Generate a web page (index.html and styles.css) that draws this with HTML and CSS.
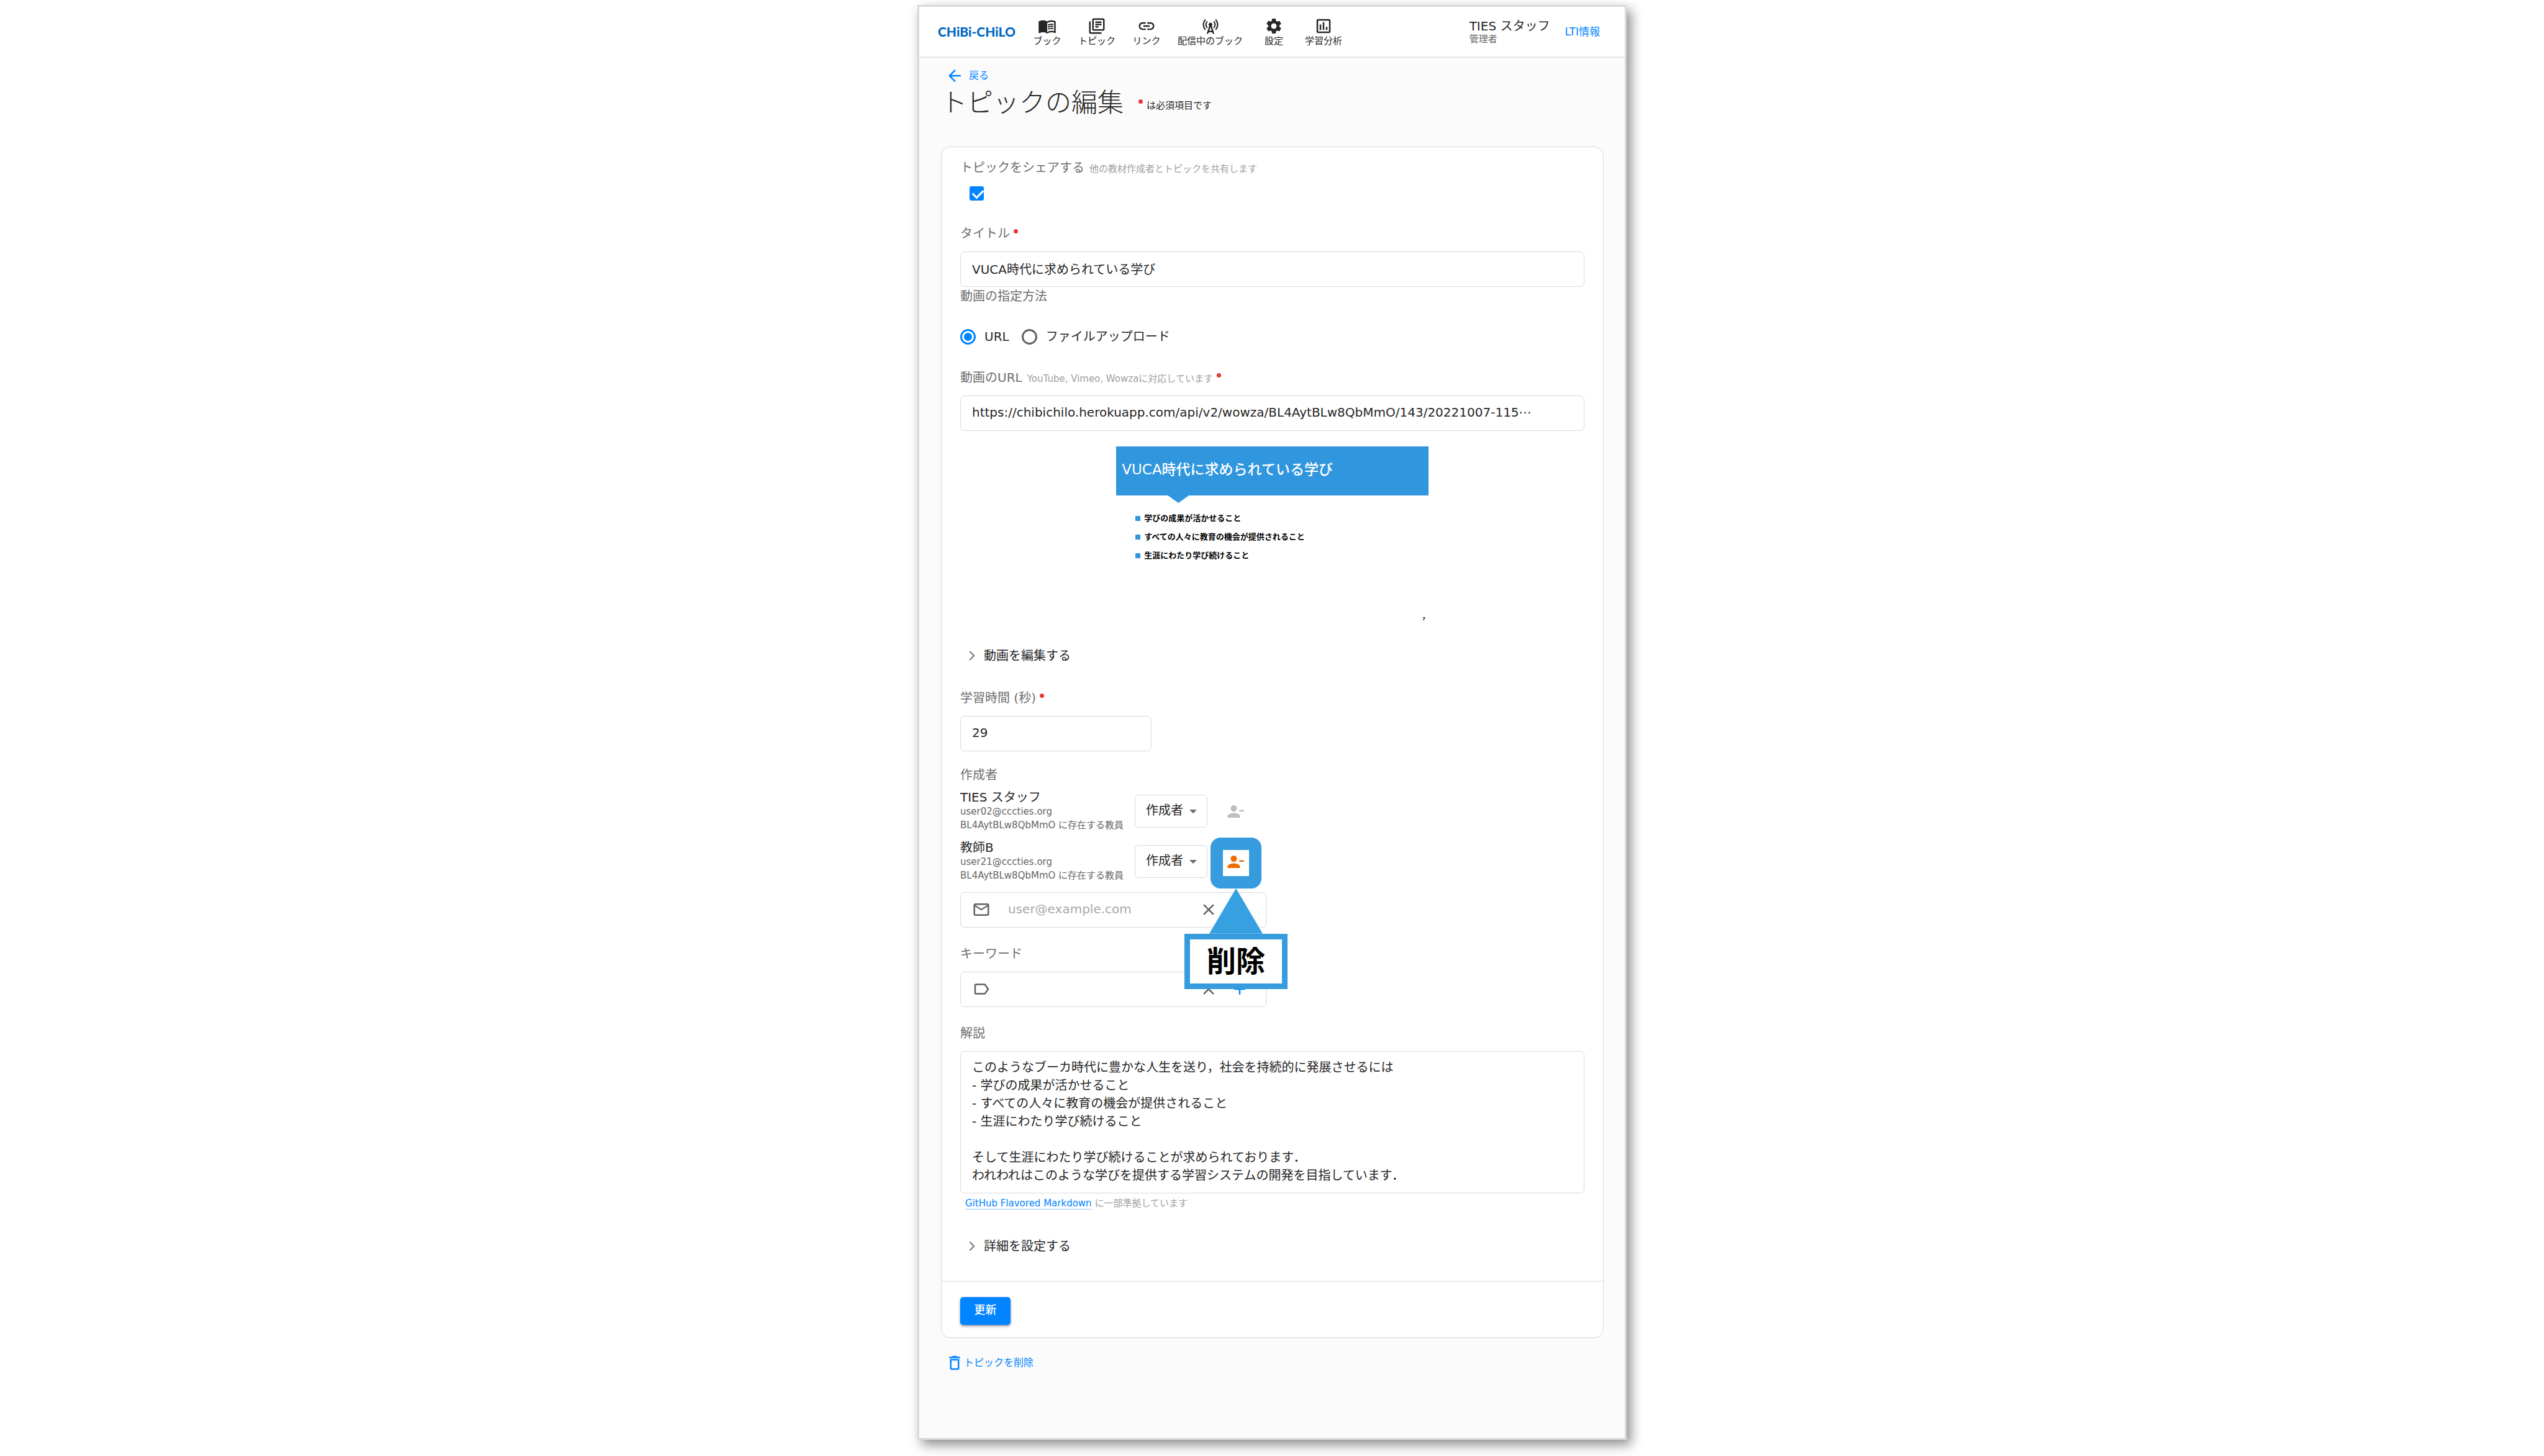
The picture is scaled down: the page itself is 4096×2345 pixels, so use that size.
FILE: index.html
```html
<!DOCTYPE html>
<html lang="ja">
<head>
<meta charset="utf-8">
<meta name="viewport" content="width=device-width, initial-scale=1">
<title>トピックの編集 - CHiBi-CHiLO</title>
<link rel="stylesheet" href="styles.css">
</head>
<body>
<svg class="sprite" aria-hidden="true">
  <symbol id="i-book" viewBox="0 0 24 24"><path d="M21 5c-1.11-.35-2.33-.5-3.5-.5-1.95 0-4.05.4-5.5 1.5-1.45-1.1-3.55-1.5-5.5-1.5S2.45 4.9 1 6v14.65c0 .25.25.5.5.5.1 0 .15-.05.25-.05C3.1 20.45 5.05 20 6.5 20c1.95 0 4.05.4 5.5 1.5 1.35-.85 3.8-1.5 5.5-1.5 1.65 0 3.35.3 4.75 1.05.1.05.15.05.25.05.25 0 .5-.25.5-.5V6c-.6-.45-1.25-.75-2-1zm0 13.5c-1.1-.35-2.3-.5-3.5-.5-1.7 0-4.15.65-5.5 1.5V8c1.35-.85 3.8-1.5 5.5-1.5 1.2 0 2.4.15 3.5.5v11.5z"/><path d="M17.5 10.5c.88 0 1.73.09 2.5.26V9.24c-.79-.15-1.64-.24-2.5-.24-1.7 0-3.24.29-4.5.83v1.66c1.13-.64 2.7-.99 4.5-.99zM13 12.49v1.66c1.13-.64 2.7-.99 4.5-.99.88 0 1.73.09 2.5.26V11.9c-.79-.15-1.64-.24-2.5-.24-1.7 0-3.24.3-4.5.83zM17.5 14.33c-1.7 0-3.24.29-4.5.83v1.66c1.13-.64 2.7-.99 4.5-.99.88 0 1.73.09 2.5.26v-1.52c-.79-.16-1.64-.24-2.5-.24z"/></symbol>
  <symbol id="i-topic" viewBox="0 0 24 24"><path d="M4 6H2v14c0 1.1.9 2 2 2h14v-2H4V6zm16-4H8c-1.1 0-2 .9-2 2v12c0 1.1.9 2 2 2h12c1.1 0 2-.9 2-2V4c0-1.1-.9-2-2-2zm0 14H8V4h12v12zM10 9h8v2h-8zm0 3h4v2h-4zm0-6h8v2h-8z"/></symbol>
  <symbol id="i-link" viewBox="0 0 24 24"><path d="M3.9 12c0-1.71 1.39-3.1 3.1-3.1h4V7H7c-2.76 0-5 2.24-5 5s2.24 5 5 5h4v-1.9H7c-1.71 0-3.1-1.39-3.1-3.1zM8 13h8v-2H8v2zm9-6h-4v1.9h4c1.71 0 3.1 1.39 3.1 3.1s-1.39 3.1-3.1 3.1h-4V17h4c2.76 0 5-2.24 5-5s-2.24-5-5-5z"/></symbol>
  <symbol id="i-tower" viewBox="0 0 24 24"><path d="m7.3 14.7 1.2-1.2c-1-1-1.5-2.3-1.5-3.5 0-1.3.5-2.6 1.5-3.5L7.3 5.3c-1.3 1.3-2 3-2 4.7s.7 3.4 2 4.7zM19.1 2.9l-1.2 1.2c1.6 1.6 2.4 3.8 2.4 5.9 0 2.1-.8 4.3-2.4 5.9l1.2 1.2c2-2 2.9-4.5 2.9-7.1 0-2.6-1-5.1-2.9-7.1zM6.1 4.1 4.9 2.9C3 4.9 2 7.4 2 10c0 2.6 1 5.1 2.9 7.1l1.2-1.2c-1.6-1.6-2.4-3.8-2.4-5.9 0-2.1.8-4.3 2.4-5.9zm10.6 10.6c1.3-1.3 2-3 2-4.7-.1-1.7-.7-3.4-2-4.7l-1.2 1.2c1 1 1.5 2.3 1.5 3.5 0 1.3-.5 2.6-1.5 3.5l1.2 1.2zM14.5 10c0-1.38-1.12-2.5-2.5-2.5S9.5 8.62 9.5 10c0 .76.34 1.42.87 1.88L7 22h2l.67-2h4.67l.66 2h2l-3.37-10.12c.53-.46.87-1.12.87-1.88zm-4.17 8L12 13l1.67 5h-3.34z"/></symbol>
  <symbol id="i-gear" viewBox="0 0 24 24"><path d="M19.14 12.94c.04-.3.06-.61.06-.94 0-.32-.02-.64-.07-.94l2.03-1.58c.18-.14.23-.41.12-.61l-1.92-3.32c-.12-.22-.37-.29-.59-.22l-2.39.96c-.5-.38-1.03-.7-1.62-.94l-.36-2.54c-.04-.24-.24-.41-.48-.41h-3.84c-.24 0-.43.17-.47.41l-.36 2.54c-.59.24-1.13.57-1.62.94l-2.39-.96c-.22-.08-.47 0-.59.22L2.74 8.87c-.12.21-.08.47.12.61l2.03 1.58c-.05.3-.09.63-.09.94s.02.64.07.94l-2.03 1.58c-.18.14-.23.41-.12.61l1.92 3.32c.12.22.37.29.59.22l2.39-.96c.5.38 1.03.7 1.62.94l.36 2.54c.05.24.24.41.48.41h3.84c.24 0 .44-.17.47-.41l.36-2.54c.59-.24 1.13-.56 1.62-.94l2.39.96c.22.08.47 0 .59-.22l1.92-3.32c.12-.22.07-.47-.12-.61l-2.01-1.58zM12 15.6c-1.98 0-3.6-1.62-3.6-3.6s1.62-3.6 3.6-3.6 3.6 1.62 3.6 3.6-1.62 3.6-3.6 3.6z"/></symbol>
  <symbol id="i-chart" viewBox="0 0 24 24"><path d="M9 17H7v-7h2v7zm4 0h-2V7h2v10zm4 0h-2v-4h2v4zm2 2H5V5h14v14zm0-16H5c-1.1 0-2 .9-2 2v14c0 1.1.9 2 2 2h14c1.1 0 2-.9 2-2V5c0-1.1-.9-2-2-2z"/></symbol>
  <symbol id="i-back" viewBox="0 0 24 24"><path d="M20 11H7.83l5.59-5.59L12 4l-8 8 8 8 1.41-1.41L7.83 13H20v-2z"/></symbol>
  <symbol id="i-chevron" viewBox="0 0 24 24"><path d="M6.23 20.23 8 22l10-10L8 2 6.23 3.77 14.46 12z"/></symbol>
  <symbol id="i-remove" viewBox="0 0 24 24"><path d="M14 8c0-2.21-1.79-4-4-4S6 5.79 6 8s1.79 4 4 4 4-1.79 4-4zm3 2v2h6v-2h-6zM2 18v2h16v-2c0-2.66-5.33-4-8-4s-8 1.34-8 4z"/></symbol>
  <symbol id="i-mail" viewBox="0 0 24 24"><path d="M22 6c0-1.1-.9-2-2-2H4c-1.1 0-2 .9-2 2v12c0 1.1.9 2 2 2h16c1.1 0 2-.9 2-2V6zm-2 0-8 5-8-5h16zm0 12H4V8l8 5 8-5v10z"/></symbol>
  <symbol id="i-label" viewBox="0 0 24 24"><path d="M17.63 5.84C17.27 5.33 16.67 5 16 5L5 5.01C3.9 5.01 3 5.9 3 7v10c0 1.1.9 1.99 2 1.99L16 19c.67 0 1.27-.33 1.63-.84L22 12l-4.37-6.16zM16 17H5V7h11l3.55 5L16 17z"/></symbol>
  <symbol id="i-close" viewBox="0 0 24 24"><path d="M19 6.41 17.59 5 12 10.59 6.41 5 5 6.41 10.59 12 5 17.59 6.41 19 12 13.41 17.59 19 19 17.59 13.41 12z"/></symbol>
  <symbol id="i-add" viewBox="0 0 24 24"><path d="M19 13h-6v6h-2v-6H5v-2h6V5h2v6h6v2z"/></symbol>
  <symbol id="i-trash" viewBox="0 0 24 24"><path d="M6 19c0 1.1.9 2 2 2h8c1.1 0 2-.9 2-2V7H6v12zM8 9h8v10H8V9zm7.5-5-1-1h-5l-1 1H5v2h14V4z"/></symbol>
</svg>

<div class="window">
  <header class="appbar">
    <a class="logo" href="#">CHiBi-CHiLO</a>
    <nav class="nav">
      <a class="nav-item" href="#"><svg class="icon"><use href="#i-book"/></svg>ブック</a>
      <a class="nav-item" href="#"><svg class="icon"><use href="#i-topic"/></svg>トピック</a>
      <a class="nav-item" href="#"><svg class="icon"><use href="#i-link"/></svg>リンク</a>
      <a class="nav-item" href="#"><svg class="icon"><use href="#i-tower"/></svg>配信中のブック</a>
      <a class="nav-item" href="#"><svg class="icon"><use href="#i-gear"/></svg>設定</a>
      <a class="nav-item" href="#"><svg class="icon"><use href="#i-chart"/></svg>学習分析</a>
    </nav>
    <div class="account">
      <div class="account-name">TIES スタッフ</div>
      <div class="account-role">管理者</div>
    </div>
    <a class="lti" href="#">LTI情報</a>
  </header>

  <main class="main">
    <a class="action-link back" href="#"><svg class="icon"><use href="#i-back"/></svg>戻る</a>
    <div class="heading">
      <h1 class="title">トピックの編集</h1>
      <p class="required-note"><span class="dot"></span>は必須項目です</p>
    </div>

    <form class="card">
      <div class="card-body">
        <div class="field-label"><label for="share">トピックをシェアする</label><span class="hint">他の教材作成者とトピックを共有します</span></div>
        <div class="check-row"><input class="checkbox" type="checkbox" id="share" checked></div>

        <div class="field-label gap-large"><label for="title">タイトル</label><span class="dot"></span></div>
        <input class="text-input" type="text" id="title" value="VUCA時代に求められている学び">

        <fieldset class="source">
          <legend class="field-label">動画の指定方法</legend>
          <div class="radio-row">
            <label class="radio-label"><input class="radio" type="radio" name="source" checked>URL</label>
            <label class="radio-label"><input class="radio" type="radio" name="source">ファイルアップロード</label>
          </div>
        </fieldset>

        <div class="field-label gap-large"><label for="url">動画のURL</label><span class="hint">YouTube, Vimeo, Wowzaに対応しています</span><span class="dot"></span></div>
        <input class="text-input" type="text" id="url" value="https://chibichilo.herokuapp.com/api/v2/wowza/BL4AytBLw8QbMmO/143/20221007-115⋯">

        <section class="slide">
          <h2 class="slide-title">VUCA時代に求められている学び</h2>
          <ul class="slide-list">
            <li>学びの成果が活かせること</li>
            <li>すべての人々に教育の機会が提供されること</li>
            <li>生涯にわたり学び続けること</li>
          </ul>
          <div class="slide-page">7</div>
        </section>

        <button class="disclosure" type="button"><svg class="icon-chevron"><use href="#i-chevron"/></svg>動画を編集する</button>

        <div class="field-label gap-large"><label for="time">学習時間 (秒)</label><span class="dot"></span></div>
        <input class="text-input short" type="text" inputmode="numeric" id="time" value="29">

        <div class="field-label gap-small"><label for="email">作成者</label></div>
        <div class="authors">
          <div class="author">
            <div class="author-info">
              <div class="author-name">TIES スタッフ</div>
              <div class="author-meta">user02@cccties.org</div>
              <div class="author-meta">BL4AytBLw8QbMmO に存在する教員</div>
            </div>
            <div class="select-wrap"><select class="select" aria-label="TIES スタッフ"><option>作成者</option></select></div>
            <div class="remove-wrap"><button class="icon-button muted" type="button" disabled aria-label="削除"><svg class="icon"><use href="#i-remove"/></svg></button></div>
          </div>
          <div class="author">
            <div class="author-info">
              <div class="author-name">教師B</div>
              <div class="author-meta">user21@cccties.org</div>
              <div class="author-meta">BL4AytBLw8QbMmO に存在する教員</div>
            </div>
            <div class="select-wrap"><select class="select" aria-label="教師B"><option>作成者</option></select></div>
            <div class="remove-wrap">
              <button class="icon-button warn" type="button" aria-label="削除"><svg class="icon"><use href="#i-remove"/></svg></button>
              <div class="callout">
                <div class="callout-frame"></div>
                <div class="callout-arrow"></div>
                <div class="callout-text">削除</div>
              </div>
            </div>
          </div>
        </div>
        <div class="input-group">
          <svg class="icon"><use href="#i-mail"/></svg>
          <input class="group-input" type="email" id="email" placeholder="user@example.com">
          <button class="icon-button" type="button" aria-label="クリア"><svg class="icon"><use href="#i-close"/></svg></button>
          <button class="icon-button primary" type="button" aria-label="追加"><svg class="icon"><use href="#i-add"/></svg></button>
        </div>

        <div class="field-label gap-medium"><label for="keyword">キーワード</label></div>
        <div class="input-group">
          <svg class="icon"><use href="#i-label"/></svg>
          <input class="group-input" type="text" id="keyword">
          <button class="icon-button" type="button" aria-label="クリア"><svg class="icon"><use href="#i-close"/></svg></button>
          <button class="icon-button primary" type="button" aria-label="追加"><svg class="icon"><use href="#i-add"/></svg></button>
        </div>

        <div class="field-label gap-medium"><label for="description">解説</label></div>
        <textarea class="textarea" id="description" rows="7">このようなブーカ時代に豊かな人生を送り，社会を持続的に発展させるには
- 学びの成果が活かせること
- すべての人々に教育の機会が提供されること
- 生涯にわたり学び続けること

そして生涯にわたり学び続けることが求められております．
われわれはこのような学びを提供する学習システムの開発を目指しています．</textarea>
        <p class="helper"><a class="helper-link" href="#">GitHub Flavored Markdown</a> に一部準拠しています</p>

        <button class="disclosure" type="button"><svg class="icon-chevron"><use href="#i-chevron"/></svg>詳細を設定する</button>
      </div>
      <div class="card-actions"><button class="submit" type="submit">更新</button></div>
    </form>

    <a class="action-link delete" href="#"><svg class="icon"><use href="#i-trash"/></svg>トピックを削除</a>
  </main>
</div>
</body>
</html>
```
FILE: styles.css
```css
:root {
  --primary: #0084ff;
  --text: #262626;
  --label: #6e6e6e;
  --hint: #9e9e9e;
  --line: #d9d9d9;
  --callout: #369cdd;
}

* {
  box-sizing: border-box;
}

body {
  margin: 0;
  padding: 8px 16px 27px;
  background: #fff;
  color: var(--text);
  font-family: "DejaVu Sans", "Noto Sans CJK JP", sans-serif;
  font-size: 20px;
  line-height: 30px;
}

h1, h2, p, ul, fieldset {
  margin: 0;
  padding: 0;
  border: 0;
}

a {
  color: inherit;
  text-decoration: none;
}

button, input, select, textarea {
  margin: 0;
  color: inherit;
  font: inherit;
}

button {
  padding: 0;
  border: 0;
  background: none;
}

.sprite {
  display: none;
}

.icon {
  flex: none;
  display: block;
  width: 30px;
  height: 30px;
  fill: currentColor;
}

.window {
  max-width: 1142px;
  margin: 0 auto;
  border: 3px solid #d9d9d9;
  background: #fbfbfb;
  box-shadow: 7px 8px 18px rgba(0, 0, 0, 0.45);
}

/* Header */

.appbar {
  display: flex;
  align-items: center;
  height: 82px;
  padding: 0 40px 0 30px;
  border-bottom: 2px solid #e4e4e4;
  background: #fff;
}

.logo {
  width: 126px;
  color: #0068c4;
  font-family: Lato, sans-serif;
  font-size: 21px;
  font-weight: 900;
}

.nav {
  display: flex;
  gap: 20px;
  margin-left: 20px;
}

.nav-item {
  display: flex;
  flex-direction: column;
  align-items: center;
  min-width: 60px;
  font-size: 15px;
  line-height: 18px;
}

.account {
  margin-left: auto;
}

.account-name {
  line-height: 24px;
}

.account-role {
  color: #666;
  font-size: 15px;
  line-height: 18px;
}

.lti {
  margin-left: 24px;
  color: var(--primary);
  font-size: 17px;
}

/* Page heading */

.main {
  padding: 14px 34px 106px 35px;
}

.action-link {
  display: flex;
  align-items: center;
  width: fit-content;
  margin-left: 7px;
  color: var(--primary);
  font-size: 16px;
}

.back {
  gap: 8px;
}

.heading {
  display: flex;
  align-items: center;
  gap: 24px;
  margin: 4px 0 45px;
}

.title {
  font-size: 42px;
  font-weight: 300;
  line-height: 50px;
}

.required-note {
  display: flex;
  gap: 6px;
  padding-top: 8px;
  font-size: 15px;
  line-height: 20px;
}

.dot {
  flex: none;
  width: 7px;
  height: 7px;
  border-radius: 50%;
  background: #e53935;
}

/* Form card */

.card {
  border: 1px solid var(--line);
  border-radius: 15px;
  background: #fff;
}

.card-body {
  padding: 18px 30px 41px;
}

.card-actions {
  padding: 25px 30px 20px;
  border-top: 1px solid var(--line);
}

.field-label {
  display: flex;
  align-items: baseline;
  padding: 0;
  color: var(--label);
}

.field-label .dot {
  align-self: flex-start;
  margin: 8px 0 0 6px;
}

.gap-small {
  margin-top: 23px;
}

.gap-medium {
  margin-top: 27px;
}

.gap-large {
  margin-top: 38px;
}

.hint {
  margin-left: 8px;
  color: var(--hint);
  font-size: 15px;
  line-height: 20px;
}

.check-row {
  display: flex;
  padding: 15px 15px 0;
}

.checkbox {
  width: 23px;
  height: 23px;
  border-radius: 3px;
  appearance: none;
  background: var(--primary);
}

.checkbox:checked::before {
  content: "";
  display: block;
  width: 8px;
  height: 14px;
  margin: 2px 0 0 8px;
  border: solid #fff;
  border-width: 0 3px 3px 0;
  transform: rotate(45deg);
}

.text-input,
.input-group,
.textarea {
  display: block;
  width: 100%;
  margin-top: 14px;
  border: 1px solid var(--line);
  border-radius: 7px;
  background: #fff;
}

.text-input {
  height: 57px;
  padding: 0 18px 3px;
}

.short {
  max-width: 308px;
}

.radio-row {
  display: flex;
  gap: 20px;
  margin-top: 38px;
  line-height: 25px;
}

.radio-label {
  display: flex;
  align-items: center;
  gap: 14px;
}

.radio {
  display: grid;
  place-items: center;
  width: 25px;
  height: 25px;
  border: 3px solid #616161;
  border-radius: 50%;
  appearance: none;
}

.radio:checked {
  border-color: var(--primary);
}

.radio:checked::before {
  content: "";
  width: 13px;
  height: 13px;
  border-radius: 50%;
  background: var(--primary);
}

/* Video slide */

.slide {
  display: flex;
  flex-direction: column;
  width: 50%;
  margin: 25px auto 0;
  aspect-ratio: 16 / 9;
  color: #000;
  font-weight: 700;
}

.slide-title {
  position: relative;
  padding: 22px 9px 27px;
  background: #3096de;
  color: #fff;
  font-size: 23px;
  font-weight: 500;
}

.slide-title::after {
  content: "";
  position: absolute;
  top: 100%;
  left: 83px;
  width: 34px;
  height: 12px;
  background: #3096de;
  clip-path: polygon(0 0, 100% 0, 50% 100%);
}

.slide-list {
  padding: 22px 0 0 31px;
  list-style: none;
  font-size: 13px;
}

.slide-list li {
  display: flex;
  align-items: center;
  gap: 6px;
}

.slide-list li::before {
  content: "";
  width: 8px;
  height: 8px;
  background: #3096de;
}

.slide-page {
  margin-top: auto;
  padding-right: 5px;
  font-size: 7px;
  line-height: 10px;
  text-align: right;
}

.disclosure {
  display: flex;
  align-items: center;
  gap: 10px;
  margin-top: 39px;
  padding-left: 10px;
}

.icon-chevron {
  width: 18px;
  height: 18px;
  fill: #6a6a6a;
}

/* Authors */

.authors {
  display: grid;
  gap: 11px;
  margin-top: 9px;
}

.author {
  display: flex;
  align-items: center;
}

.author-info {
  width: 281px;
  padding-bottom: 2px;
}

.author-name {
  line-height: 24px;
}

.author-meta {
  color: #666;
  font-size: 15px;
  line-height: 22px;
}

.select-wrap {
  position: relative;
}

.select-wrap::after {
  content: "";
  position: absolute;
  top: 24px;
  right: 17px;
  border: solid transparent;
  border-width: 6px 6px 0;
  border-top-color: #6a6a6a;
}

.select {
  display: block;
  width: 117px;
  height: 53px;
  padding: 0 17px 3px;
  border: 1px solid var(--line);
  border-radius: 6px;
  appearance: none;
  background: #fff;
}

.remove-wrap {
  position: relative;
  margin-left: 30px;
}

.icon-button {
  display: block;
  color: #616161;
}

.muted {
  color: #bdbdbd;
}

.warn {
  color: #ef6c00;
}

.primary {
  color: var(--primary);
}

.callout {
  position: absolute;
  top: -24px;
  left: -67px;
  z-index: 1;
  display: flex;
  flex-direction: column;
  align-items: center;
  width: 166px;
}

.callout-frame {
  width: 82px;
  height: 82px;
  border: 20px solid var(--callout);
  border-radius: 16px;
}

.callout-arrow {
  width: 86px;
  height: 73px;
  background: #37a0e0;
  clip-path: polygon(50% 0, 100% 100%, 0 100%);
}

.callout-text {
  width: 100%;
  border: 9px solid var(--callout);
  background: #fff;
  color: #000;
  font-size: 47px;
  font-weight: 700;
  line-height: 71px;
  text-align: center;
}

.input-group {
  display: flex;
  align-items: center;
  gap: 20px;
  max-width: 493px;
  height: 57px;
  padding: 0 27px 0 18px;
  color: #616161;
}

.group-input {
  flex: 1;
  min-width: 0;
  padding: 0 8px 2px;
  border: 0;
  background: none;
  color: var(--text);
}

.group-input::placeholder {
  color: #a8a8a8;
}

.textarea {
  padding: 11px 18px 13px;
  overflow: hidden;
  line-height: 29px;
  resize: none;
}

.helper {
  padding: 1px 8px 0;
  color: var(--hint);
  font-size: 15px;
}

.helper-link {
  border-bottom: 1px solid #8cc6ff;
  color: var(--primary);
}

.submit {
  display: block;
  width: 81px;
  height: 45px;
  padding-bottom: 2px;
  border-radius: 5px;
  background: var(--primary);
  box-shadow: 0 2px 4px rgba(0, 0, 0, 0.4);
  color: #fff;
  font-size: 18px;
  font-weight: 500;
}

.delete {
  margin-top: 25px;
}
```
